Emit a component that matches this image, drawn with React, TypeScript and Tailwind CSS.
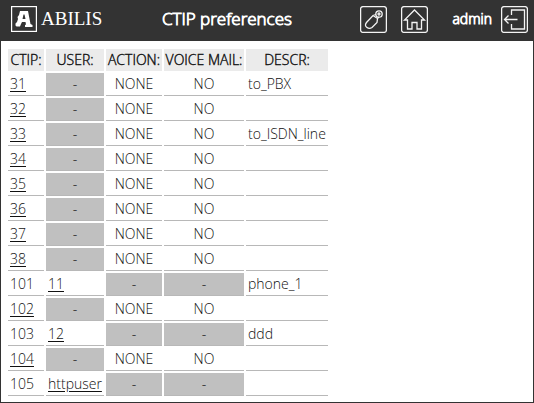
import React from "react";

type Cell = { text: string; link?: boolean } | null;
type Row = { ctip: string; link: boolean; user: Cell; action: string | null; mail: string | null; descr: string };

const free = (ctip: string, descr = ""): Row => ({ ctip, link: true, user: null, action: "NONE", mail: "NO", descr });
const owned = (ctip: string, user: string, descr = ""): Row => ({
  ctip,
  link: false,
  user: { text: user, link: true },
  action: null,
  mail: null,
  descr,
});

const rows: Row[] = [
  free("31", "to_PBX"),
  free("32"),
  free("33", "to_ISDN_line"),
  free("34"),
  free("35"),
  free("36"),
  free("37"),
  free("38"),
  owned("101", "11", "phone_1"),
  free("102"),
  owned("103", "12", "ddd"),
  free("104"),
  owned("105", "httpuser"),
];

const columns = [
  { name: "CTIP:", width: "w-9" },
  { name: "USER:", width: "w-[58px]" },
  { name: "ACTION:", width: "w-14" },
  { name: "VOICE MAIL:", width: "w-20" },
  { name: "DESCR:", width: "w-[82px]" },
];

const base = "h-[23px] border-b border-[#b8b8b8] p-0 py-px";

function Link({ children }: { children: React.ReactNode }) {
  return (
    <a href="#" className="underline underline-offset-2">
      {children}
    </a>
  );
}

function Value({ value }: { value: string | null }) {
  return <td className={value ? `${base} text-center` : `${base} bg-[#c0c0c0] text-center`}>{value ?? "-"}</td>;
}

function IconButton({ label, children }: { label: string; children: React.ReactNode }) {
  return (
    <button aria-label={label} className="block size-[27px] shrink-0">
      <svg viewBox="0 0 27 27" className="size-full" fill="none" stroke="#f4f4f4" strokeWidth="1.3">
        <rect x="0.6" y="0.6" width="25.8" height="25.8" rx="2.5" />
        {children}
      </svg>
    </button>
  );
}

export default function App() {
  return (
    <div className="min-h-screen border-x border-b border-[#333333] bg-white font-['Open_Sans',sans-serif] text-[#111111]">
      <header className="flex h-[41px] items-center bg-[#333333] pr-[5px] pb-[3px] pl-[10px] text-white">
        <div className="flex w-[151px] shrink-0 items-center gap-1">
          <svg viewBox="0 0 26 26" className="size-[26px]" aria-hidden="true">
            <rect x="0.6" y="0.6" width="24.8" height="24.8" fill="none" stroke="#fff" strokeWidth="1.2" />
            <path
              fill="#fff"
              fillRule="evenodd"
              d="M9 5H17L19.500 18L21.500 19V21H14V19L15 18.500L14.500 16H11L10 18L9 20.500H5.500L4.500 19.500V17.500L6 16L7 13L6.500 11L8 9L8.500 7ZM12.500 8.500L11.500 13H14.500L13.500 8.500Z"
            />
          </svg>
          <span className="font-['Liberation_Serif',serif] text-[19px] leading-6">ABILIS</span>
        </div>
        <h1 className="grow text-[17px] leading-6 font-light whitespace-nowrap [-webkit-text-stroke:0.9px_#fff]">CTIP preferences</h1>
        <div className="flex items-center gap-[14px]">
          <IconButton label="Preferences">
            <circle cx="19" cy="8" r="3.200" />
            <circle cx="19" cy="8" r="1" />
            <path d="M16 8.500L13 9.500L6.500 16.500C5 18.500 5 20 7 21.500C9 23 10.500 22.500 12 21.500L17 16.500L17.500 12.500M13 9.500L17.500 12.500L19 11" />
          </IconButton>
          <IconButton label="Home">
            <path d="M6.500 14H3.500L13.500 4L23.500 14H20.500V23H16V16.500H11V23H6.500Z" />
          </IconButton>
        </div>
        <span className="mr-[9px] ml-6 text-[14px] leading-6 font-light [-webkit-text-stroke:0.9px_#fff]">admin</span>
        <IconButton label="Log out">
          <path d="M10.500 9V4H23.500V23H10.500V18M16.500 13.500H3.500M7.500 9.500L3.500 13.500L7.500 17.500" />
        </IconButton>
      </header>
      <main className="px-[5px] pt-[6px] pb-1">
        <table className="table-fixed border-separate border-spacing-[2px] text-[14px] leading-5 font-light">
          <thead>
            <tr>
              {columns.map((c) => (
                <th key={c.name} scope="col" className={`${c.width} h-[22px] bg-[#ebebeb] p-0 py-px font-light whitespace-nowrap [-webkit-text-stroke:0.4px_#111]`}>
                  {c.name}
                </th>
              ))}
            </tr>
          </thead>
          <tbody>
            {rows.map((r) => (
              <tr key={r.ctip}>
                <td className={`${base} pl-[2px]`}>{r.link ? <Link>{r.ctip}</Link> : r.ctip}</td>
                {r.user ? (
                  <td className={`${base} pl-[2px]`}>
                    <Link>{r.user.text}</Link>
                  </td>
                ) : (
                  <Value value={null} />
                )}
                <Value value={r.action} />
                <Value value={r.mail} />
                <td className={`${base} pl-[2px]`}>{r.descr}</td>
              </tr>
            ))}
          </tbody>
        </table>
      </main>
    </div>
  );
}
